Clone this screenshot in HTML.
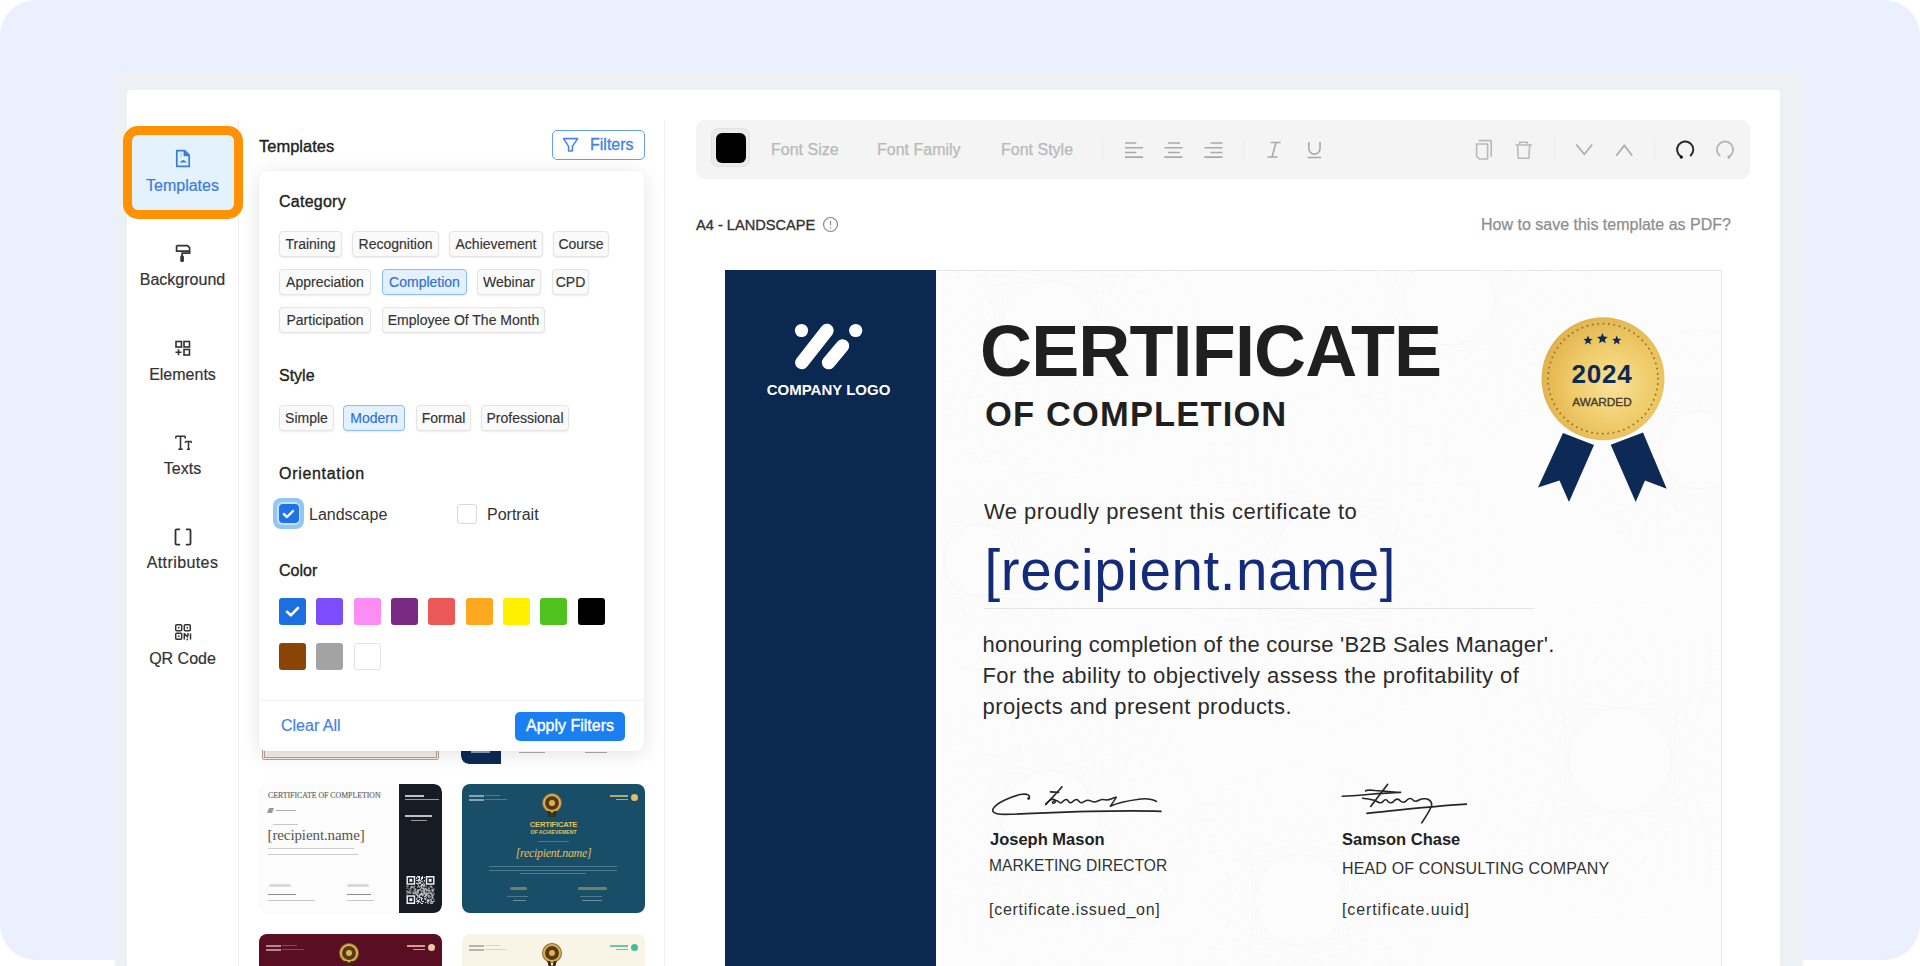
<!DOCTYPE html>
<html><head><meta charset="utf-8">
<style>
*{box-sizing:border-box;margin:0;padding:0}
html,body{width:1920px;height:966px;overflow:hidden;background:#fff;font-family:"Liberation Sans",sans-serif}
.a{position:absolute}
.t{position:absolute;line-height:1;white-space:nowrap}
#bg{position:absolute;left:0;top:0;width:1920px;height:960px;background:#EAF0FD;border-radius:36px}
#frame{position:absolute;left:116px;top:73px;width:1686px;height:920px;background:#EEF1F3;border-radius:3px;box-shadow:0 0 3px 1px #EEF1F3}
#panel{position:absolute;left:126.5px;top:89.5px;width:1653.5px;height:900px;background:#fff;border-radius:4px 4px 0 0}
#side{position:absolute;left:127px;top:120px;width:112px;height:870px;border-right:1px solid #EDEDED}
.nav{-webkit-text-stroke:.2px currentColor;font-size:16px;color:#333;text-align:center;width:111px;left:127px}
#hl{position:absolute;left:123px;top:126px;width:120px;height:93px;border:9px solid #FF9204;border-radius:15px;background:#E4F2FD}
#tpl{position:absolute;left:239px;top:120px;width:426px;height:870px;border-right:1px solid #F1F1F1}
.card{position:absolute;left:259px;top:171px;width:385px;height:580px;background:#fff;border-radius:7px;box-shadow:0 3px 20px rgba(0,0,0,.11),0 0 2px rgba(0,0,0,.04)}
.chip{-webkit-text-stroke:.15px currentColor;position:absolute;height:26px;border:1px solid #E4E4E4;border-radius:4px;background:#FAFAFA;box-shadow:0 1px 2px rgba(0,0,0,.07);font-size:14px;line-height:24px;text-align:center;color:#333;white-space:nowrap}
.chip.on{background:#E3F0FD;border-color:#8DBBF3;color:#2F6FD6}
.h{font-size:16px;color:#222;-webkit-text-stroke:.35px #222}
.sw{position:absolute;width:27px;height:27px;border-radius:3px}
.thumb{position:absolute;border-radius:8px;overflow:hidden}
.tb{font-size:16px;color:#B9B9B9;-webkit-text-stroke:.25px #B9B9B9}
.sep{position:absolute;top:139px;width:1px;height:21px;background:#EBEBEB}
</style></head><body>
<div id="bg"></div>
<div id="frame"></div>
<div id="panel"></div>
<div id="side"></div>
<div id="hl"></div>

<!-- sidebar -->
<svg class="a" style="left:170px;top:145px" width="26" height="26" viewBox="170 145 26 26" fill="none" stroke="#3A7BDE" stroke-width="1.7">
<path d="M176.8 150.6H184.6L189.2 155.2V166.4H176.8Z" stroke-linejoin="round"/><path d="M184.4 150.8V155.4H189" stroke-width="1.6"/><path d="M184.8 151.5L188.5 155.2H184.8Z" fill="#3A7BDE" stroke="none"/>
<path d="M179.6 162.6Q183.2 157.6 186.8 162.6Z" fill="#3A7BDE" stroke="none"/><path d="M181 152.5V157.5" stroke-width=".8" opacity=".5"/>
</svg>
<div class="t nav" style="top:178px;color:#3A7BDE">Templates</div>

<svg class="a" style="left:170px;top:240px" width="26" height="26" viewBox="170 240 26 26" fill="none" stroke="#333" stroke-width="1.7">
<path d="M176.6 245.6H187.4L189.6 247.6V253.2H182.1V256"/><path d="M176.6 245.6V251.2H189.6"/><rect x="180.3" y="255.4" width="3.6" height="6.6" rx="1.3" fill="#333" stroke="none"/>
</svg>
<div class="t nav" style="top:272px">Background</div>

<svg class="a" style="left:174px;top:340px" width="18" height="17" viewBox="0 0 18 17" fill="none" stroke="#333" stroke-width="1.6">
<rect x="2" y="1.5" width="5.5" height="5.5"/><rect x="10" y="1.5" width="5.5" height="5.5"/><rect x="10" y="9.5" width="5.5" height="5.5"/><path d="M1.5 12.3H7.5M4.5 9.3V15.3"/>
</svg>
<div class="t nav" style="top:366.5px">Elements</div>

<svg class="a" style="left:174px;top:434px" width="18" height="17" viewBox="0 0 18 17" fill="none" stroke="#333">
<path d="M1.8 2.2H11.2M6.5 2.2V15.2M4.3 15.2H8.7M1.8 2.2V4.4M11.2 2.2V4.4" stroke-width="1.6"/><path d="M11.5 7.5H17.5M14.5 7.5V15.2M13 15.2H16M11.5 7.5V9M17.5 7.5V9" stroke-width="1.5"/>
</svg>
<div class="t nav" style="top:461px">Texts</div>

<svg class="a" style="left:170px;top:524px" width="26" height="26" viewBox="170 524 26 26" fill="none" stroke="#333" stroke-width="1.8" stroke-linecap="round">
<path d="M179.4 529.4H176.6Q175.5 529.4 175.5 530.5V543.6Q175.5 544.7 176.6 544.7H179.4M186.6 529.4H189.4Q190.5 529.4 190.5 530.5V543.6Q190.5 544.7 189.4 544.7H186.6"/>
</svg>
<div class="t nav" style="top:555px;letter-spacing:.4px">Attributes</div>

<svg class="a" style="left:174px;top:623px" width="18" height="18" viewBox="0 0 18 18" fill="none" stroke="#333" stroke-width="1.5">
<rect x="1.7" y="1.7" width="6" height="6" rx="1"/><rect x="10.3" y="1.7" width="6" height="6" rx="1"/><rect x="1.7" y="10.3" width="6" height="6" rx="1"/>
<rect x="3.9" y="3.9" width="1.6" height="1.6" fill="#333" stroke="none"/><rect x="12.5" y="3.9" width="1.6" height="1.6" fill="#333" stroke="none"/><rect x="3.9" y="12.5" width="1.6" height="1.6" fill="#333" stroke="none"/>
<path d="M10.3 10V16.5M10.3 10.5L14 14.5M14 10V13M16.5 10.5V16.5M12.5 16.5H14" />
</svg>
<div class="t nav" style="top:650.5px">QR Code</div>

<!-- templates panel -->
<div id="tpl"></div>
<div class="t h" style="left:259px;top:138px;font-size:16.5px">Templates</div>
<div class="a" style="left:552px;top:130px;width:93px;height:30px;border:1.7px solid #689BE8;border-radius:5px"></div>
<svg class="a" style="left:558px;top:132px" width="26" height="26" viewBox="558 132 26 26" fill="none" stroke="#4A86E0" stroke-width="1.6" stroke-linejoin="round">
<path d="M563.6 138.6H577.6L572.4 146.4V151H568.6V146.4Z"/>
</svg>
<div class="t" style="left:590px;top:137.2px;font-size:16px;color:#3E82E6;-webkit-text-stroke:.3px #3E82E6">Filters</div>

<!-- thumbnails behind -->
<div class="thumb" style="left:262px;top:600px;width:177px;height:160px;background:#F3EEE6;border:3px double #B7A092;border-radius:2px"></div>
<div class="thumb" style="left:461px;top:600px;width:184px;height:164px;background:#fff"><div class="a" style="left:0;top:0;width:40px;height:164px;background:#0B2A55;border-radius:0 0 0 8px"></div><div class="a" style="left:10px;top:149px;width:19px;height:4px;background:#fff;opacity:.55"></div><div class="a" style="left:58px;top:152px;width:26px;height:1.3px;background:#AAA"></div><div class="a" style="left:124px;top:152px;width:22px;height:1.3px;background:#AAA"></div></div>
<div class="thumb" style="left:259px;top:784px;width:183px;height:129px;background:#FCFCFC;box-shadow:0 0 2px rgba(0,0,0,.05)"><div class="a" style="left:139.5px;top:0;width:43.5px;height:129px;background:#171B24;border-radius:0 8px 8px 0"></div><div class="t" style="left:9px;top:7.5px;font-family:'Liberation Serif';font-size:7.8px;color:#666;letter-spacing:0;-webkit-text-stroke:.15px #666">CERTIFICATE OF COMPLETION</div><div class="a" style="left:9px;top:24px;width:5px;height:5px;background:#999;transform:skewX(-20deg)"></div><div class="a" style="left:17px;top:25.5px;width:20px;height:1.5px;background:#A8A8A8"></div><div class="a" style="left:14px;top:40px;width:25px;height:1.3px;background:#C8C8C8"></div><div class="t" style="left:8.5px;top:44px;font-family:'Liberation Serif';font-size:15px;color:#555;letter-spacing:-.1px">[recipient.name]</div><div class="a" style="left:9px;top:64px;width:86px;height:1.4px;background:#CDCDCD"></div><div class="a" style="left:9px;top:69.5px;width:90px;height:1.4px;background:#CDCDCD"></div><div class="a" style="left:10px;top:100px;width:22px;height:2.5px;border-radius:2px;background:#DADADA"></div><div class="a" style="left:88px;top:100px;width:22px;height:2.5px;border-radius:2px;background:#DADADA"></div><div class="a" style="left:9px;top:109.5px;width:28px;height:1.8px;background:#8C8C8C"></div><div class="a" style="left:9px;top:115.5px;width:47px;height:1.3px;background:#C8C8C8"></div><div class="a" style="left:88px;top:109.5px;width:24px;height:1.8px;background:#8C8C8C"></div><div class="a" style="left:88px;top:115.5px;width:27px;height:1.3px;background:#C8C8C8"></div><div class="a" style="left:146px;top:11px;width:19px;height:1.8px;background:#DDD;opacity:.85"></div><div class="a" style="left:146px;top:15px;width:34px;height:1.3px;background:#999"></div><div class="a" style="left:146px;top:31px;width:27px;height:1.8px;background:#DDD;opacity:.85"></div><div class="a" style="left:152px;top:35.5px;width:16px;height:1.3px;background:#999"></div><svg class="a" style="left:146.5px;top:92px" width="29" height="28" viewBox="0 0 29 29"><g fill="#F2F2F2"><path d="M0 0h9v9h-9z M1.5 1.5v6h6v-6z" fill-rule="evenodd"/><rect x="3" y="3" width="3" height="3"/><path d="M20 0h9v9h-9z M21.5 1.5v6h6v-6z" fill-rule="evenodd"/><rect x="23" y="3" width="3" height="3"/><path d="M0 20h9v9h-9z M1.5 21.5v6h6v-6z" fill-rule="evenodd"/><rect x="3" y="23" width="3" height="3"/><rect x="0" y="10" width="1.05" height="1.05"/><rect x="0" y="12" width="1.05" height="1.05"/><rect x="0" y="15" width="1.05" height="1.05"/><rect x="0" y="16" width="1.05" height="1.05"/><rect x="0" y="18" width="1.05" height="1.05"/><rect x="1" y="10" width="1.05" height="1.05"/><rect x="1" y="16" width="1.05" height="1.05"/><rect x="2" y="13" width="1.05" height="1.05"/><rect x="2" y="16" width="1.05" height="1.05"/><rect x="2" y="17" width="1.05" height="1.05"/><rect x="3" y="15" width="1.05" height="1.05"/><rect x="3" y="17" width="1.05" height="1.05"/><rect x="4" y="11" width="1.05" height="1.05"/><rect x="4" y="12" width="1.05" height="1.05"/><rect x="4" y="13" width="1.05" height="1.05"/><rect x="4" y="15" width="1.05" height="1.05"/><rect x="4" y="17" width="1.05" height="1.05"/><rect x="5" y="10" width="1.05" height="1.05"/><rect x="5" y="11" width="1.05" height="1.05"/><rect x="6" y="11" width="1.05" height="1.05"/><rect x="6" y="17" width="1.05" height="1.05"/><rect x="7" y="11" width="1.05" height="1.05"/><rect x="7" y="12" width="1.05" height="1.05"/><rect x="7" y="15" width="1.05" height="1.05"/><rect x="7" y="17" width="1.05" height="1.05"/><rect x="7" y="18" width="1.05" height="1.05"/><rect x="8" y="10" width="1.05" height="1.05"/><rect x="8" y="13" width="1.05" height="1.05"/><rect x="8" y="15" width="1.05" height="1.05"/><rect x="8" y="17" width="1.05" height="1.05"/><rect x="9" y="13" width="1.05" height="1.05"/><rect x="9" y="14" width="1.05" height="1.05"/><rect x="9" y="16" width="1.05" height="1.05"/><rect x="9" y="17" width="1.05" height="1.05"/><rect x="9" y="18" width="1.05" height="1.05"/><rect x="10" y="1" width="1.05" height="1.05"/><rect x="10" y="2" width="1.05" height="1.05"/><rect x="10" y="4" width="1.05" height="1.05"/><rect x="10" y="7" width="1.05" height="1.05"/><rect x="10" y="16" width="1.05" height="1.05"/><rect x="10" y="18" width="1.05" height="1.05"/><rect x="10" y="19" width="1.05" height="1.05"/><rect x="10" y="23" width="1.05" height="1.05"/><rect x="10" y="24" width="1.05" height="1.05"/><rect x="10" y="26" width="1.05" height="1.05"/><rect x="11" y="0" width="1.05" height="1.05"/><rect x="11" y="4" width="1.05" height="1.05"/><rect x="11" y="7" width="1.05" height="1.05"/><rect x="11" y="8" width="1.05" height="1.05"/><rect x="11" y="11" width="1.05" height="1.05"/><rect x="11" y="14" width="1.05" height="1.05"/><rect x="11" y="15" width="1.05" height="1.05"/><rect x="11" y="16" width="1.05" height="1.05"/><rect x="11" y="17" width="1.05" height="1.05"/><rect x="11" y="19" width="1.05" height="1.05"/><rect x="11" y="20" width="1.05" height="1.05"/><rect x="11" y="22" width="1.05" height="1.05"/><rect x="11" y="25" width="1.05" height="1.05"/><rect x="11" y="26" width="1.05" height="1.05"/><rect x="11" y="28" width="1.05" height="1.05"/><rect x="12" y="0" width="1.05" height="1.05"/><rect x="12" y="1" width="1.05" height="1.05"/><rect x="12" y="3" width="1.05" height="1.05"/><rect x="12" y="4" width="1.05" height="1.05"/><rect x="12" y="5" width="1.05" height="1.05"/><rect x="12" y="7" width="1.05" height="1.05"/><rect x="12" y="9" width="1.05" height="1.05"/><rect x="12" y="10" width="1.05" height="1.05"/><rect x="12" y="14" width="1.05" height="1.05"/><rect x="12" y="15" width="1.05" height="1.05"/><rect x="12" y="17" width="1.05" height="1.05"/><rect x="12" y="20" width="1.05" height="1.05"/><rect x="12" y="21" width="1.05" height="1.05"/><rect x="12" y="25" width="1.05" height="1.05"/><rect x="12" y="26" width="1.05" height="1.05"/><rect x="12" y="27" width="1.05" height="1.05"/><rect x="13" y="0" width="1.05" height="1.05"/><rect x="13" y="1" width="1.05" height="1.05"/><rect x="13" y="2" width="1.05" height="1.05"/><rect x="13" y="3" width="1.05" height="1.05"/><rect x="13" y="4" width="1.05" height="1.05"/><rect x="13" y="6" width="1.05" height="1.05"/><rect x="13" y="7" width="1.05" height="1.05"/><rect x="13" y="11" width="1.05" height="1.05"/><rect x="13" y="14" width="1.05" height="1.05"/><rect x="13" y="19" width="1.05" height="1.05"/><rect x="13" y="20" width="1.05" height="1.05"/><rect x="13" y="21" width="1.05" height="1.05"/><rect x="13" y="22" width="1.05" height="1.05"/><rect x="13" y="24" width="1.05" height="1.05"/><rect x="13" y="26" width="1.05" height="1.05"/><rect x="14" y="4" width="1.05" height="1.05"/><rect x="14" y="6" width="1.05" height="1.05"/><rect x="14" y="7" width="1.05" height="1.05"/><rect x="14" y="10" width="1.05" height="1.05"/><rect x="14" y="13" width="1.05" height="1.05"/><rect x="14" y="14" width="1.05" height="1.05"/><rect x="14" y="18" width="1.05" height="1.05"/><rect x="14" y="19" width="1.05" height="1.05"/><rect x="14" y="22" width="1.05" height="1.05"/><rect x="14" y="27" width="1.05" height="1.05"/><rect x="15" y="1" width="1.05" height="1.05"/><rect x="15" y="2" width="1.05" height="1.05"/><rect x="15" y="3" width="1.05" height="1.05"/><rect x="15" y="5" width="1.05" height="1.05"/><rect x="15" y="8" width="1.05" height="1.05"/><rect x="15" y="9" width="1.05" height="1.05"/><rect x="15" y="10" width="1.05" height="1.05"/><rect x="15" y="11" width="1.05" height="1.05"/><rect x="15" y="12" width="1.05" height="1.05"/><rect x="15" y="15" width="1.05" height="1.05"/><rect x="15" y="17" width="1.05" height="1.05"/><rect x="15" y="18" width="1.05" height="1.05"/><rect x="15" y="19" width="1.05" height="1.05"/><rect x="15" y="22" width="1.05" height="1.05"/><rect x="15" y="23" width="1.05" height="1.05"/><rect x="15" y="24" width="1.05" height="1.05"/><rect x="15" y="25" width="1.05" height="1.05"/><rect x="15" y="28" width="1.05" height="1.05"/><rect x="16" y="0" width="1.05" height="1.05"/><rect x="16" y="1" width="1.05" height="1.05"/><rect x="16" y="2" width="1.05" height="1.05"/><rect x="16" y="5" width="1.05" height="1.05"/><rect x="16" y="8" width="1.05" height="1.05"/><rect x="16" y="9" width="1.05" height="1.05"/><rect x="16" y="12" width="1.05" height="1.05"/><rect x="16" y="15" width="1.05" height="1.05"/><rect x="16" y="18" width="1.05" height="1.05"/><rect x="16" y="19" width="1.05" height="1.05"/><rect x="16" y="20" width="1.05" height="1.05"/><rect x="16" y="23" width="1.05" height="1.05"/><rect x="16" y="26" width="1.05" height="1.05"/><rect x="16" y="28" width="1.05" height="1.05"/><rect x="17" y="7" width="1.05" height="1.05"/><rect x="17" y="9" width="1.05" height="1.05"/><rect x="17" y="10" width="1.05" height="1.05"/><rect x="17" y="12" width="1.05" height="1.05"/><rect x="17" y="13" width="1.05" height="1.05"/><rect x="17" y="14" width="1.05" height="1.05"/><rect x="17" y="16" width="1.05" height="1.05"/><rect x="17" y="17" width="1.05" height="1.05"/><rect x="17" y="19" width="1.05" height="1.05"/><rect x="17" y="26" width="1.05" height="1.05"/><rect x="18" y="1" width="1.05" height="1.05"/><rect x="18" y="4" width="1.05" height="1.05"/><rect x="18" y="5" width="1.05" height="1.05"/><rect x="18" y="8" width="1.05" height="1.05"/><rect x="18" y="9" width="1.05" height="1.05"/><rect x="18" y="10" width="1.05" height="1.05"/><rect x="18" y="13" width="1.05" height="1.05"/><rect x="18" y="14" width="1.05" height="1.05"/><rect x="18" y="15" width="1.05" height="1.05"/><rect x="18" y="16" width="1.05" height="1.05"/><rect x="18" y="17" width="1.05" height="1.05"/><rect x="18" y="18" width="1.05" height="1.05"/><rect x="18" y="21" width="1.05" height="1.05"/><rect x="18" y="23" width="1.05" height="1.05"/><rect x="19" y="12" width="1.05" height="1.05"/><rect x="19" y="13" width="1.05" height="1.05"/><rect x="19" y="17" width="1.05" height="1.05"/><rect x="19" y="19" width="1.05" height="1.05"/><rect x="19" y="20" width="1.05" height="1.05"/><rect x="19" y="21" width="1.05" height="1.05"/><rect x="19" y="23" width="1.05" height="1.05"/><rect x="19" y="24" width="1.05" height="1.05"/><rect x="19" y="27" width="1.05" height="1.05"/><rect x="20" y="10" width="1.05" height="1.05"/><rect x="20" y="13" width="1.05" height="1.05"/><rect x="20" y="14" width="1.05" height="1.05"/><rect x="20" y="15" width="1.05" height="1.05"/><rect x="20" y="17" width="1.05" height="1.05"/><rect x="20" y="18" width="1.05" height="1.05"/><rect x="20" y="19" width="1.05" height="1.05"/><rect x="20" y="20" width="1.05" height="1.05"/><rect x="20" y="22" width="1.05" height="1.05"/><rect x="21" y="14" width="1.05" height="1.05"/><rect x="21" y="18" width="1.05" height="1.05"/><rect x="21" y="19" width="1.05" height="1.05"/><rect x="21" y="24" width="1.05" height="1.05"/><rect x="21" y="25" width="1.05" height="1.05"/><rect x="21" y="26" width="1.05" height="1.05"/><rect x="21" y="27" width="1.05" height="1.05"/><rect x="22" y="12" width="1.05" height="1.05"/><rect x="22" y="14" width="1.05" height="1.05"/><rect x="22" y="15" width="1.05" height="1.05"/><rect x="22" y="17" width="1.05" height="1.05"/><rect x="22" y="18" width="1.05" height="1.05"/><rect x="22" y="20" width="1.05" height="1.05"/><rect x="22" y="21" width="1.05" height="1.05"/><rect x="22" y="24" width="1.05" height="1.05"/><rect x="22" y="25" width="1.05" height="1.05"/><rect x="22" y="26" width="1.05" height="1.05"/><rect x="22" y="28" width="1.05" height="1.05"/><rect x="23" y="12" width="1.05" height="1.05"/><rect x="23" y="14" width="1.05" height="1.05"/><rect x="23" y="15" width="1.05" height="1.05"/><rect x="23" y="17" width="1.05" height="1.05"/><rect x="23" y="20" width="1.05" height="1.05"/><rect x="23" y="22" width="1.05" height="1.05"/><rect x="23" y="25" width="1.05" height="1.05"/><rect x="24" y="10" width="1.05" height="1.05"/><rect x="24" y="15" width="1.05" height="1.05"/><rect x="24" y="17" width="1.05" height="1.05"/><rect x="24" y="21" width="1.05" height="1.05"/><rect x="24" y="24" width="1.05" height="1.05"/><rect x="24" y="27" width="1.05" height="1.05"/><rect x="25" y="10" width="1.05" height="1.05"/><rect x="25" y="11" width="1.05" height="1.05"/><rect x="25" y="17" width="1.05" height="1.05"/><rect x="25" y="18" width="1.05" height="1.05"/><rect x="25" y="19" width="1.05" height="1.05"/><rect x="25" y="24" width="1.05" height="1.05"/><rect x="25" y="25" width="1.05" height="1.05"/><rect x="25" y="26" width="1.05" height="1.05"/><rect x="25" y="28" width="1.05" height="1.05"/><rect x="26" y="11" width="1.05" height="1.05"/><rect x="26" y="13" width="1.05" height="1.05"/><rect x="26" y="14" width="1.05" height="1.05"/><rect x="26" y="15" width="1.05" height="1.05"/><rect x="26" y="18" width="1.05" height="1.05"/><rect x="26" y="20" width="1.05" height="1.05"/><rect x="26" y="21" width="1.05" height="1.05"/><rect x="26" y="22" width="1.05" height="1.05"/><rect x="26" y="23" width="1.05" height="1.05"/><rect x="26" y="26" width="1.05" height="1.05"/><rect x="26" y="27" width="1.05" height="1.05"/><rect x="26" y="28" width="1.05" height="1.05"/><rect x="27" y="14" width="1.05" height="1.05"/><rect x="27" y="15" width="1.05" height="1.05"/><rect x="27" y="16" width="1.05" height="1.05"/><rect x="27" y="19" width="1.05" height="1.05"/><rect x="27" y="20" width="1.05" height="1.05"/><rect x="27" y="22" width="1.05" height="1.05"/><rect x="27" y="26" width="1.05" height="1.05"/><rect x="28" y="13" width="1.05" height="1.05"/><rect x="28" y="18" width="1.05" height="1.05"/><rect x="28" y="24" width="1.05" height="1.05"/><rect x="28" y="26" width="1.05" height="1.05"/></g></svg></div>
<div class="thumb" style="left:462px;top:784px;width:183px;height:129px;background:#194E68"><div class="a" style="left:7px;top:11px;width:15px;height:1.5px;background:#CFE0E8;opacity:.6"></div><div class="a" style="left:23px;top:11px;width:15px;height:1.2px;background:#CFE0E8;opacity:.3"></div><div class="a" style="left:7px;top:15px;width:15px;height:1.5px;background:#CFE0E8;opacity:.6"></div><div class="a" style="left:23px;top:15px;width:22px;height:1.2px;background:#CFE0E8;opacity:.3"></div><div class="a" style="left:148px;top:11px;width:18px;height:1.6px;background:#E5BF5E;opacity:.8"></div><div class="a" style="left:154px;top:14.5px;width:12px;height:1.6px;background:#E5BF5E;opacity:.8"></div><div class="a" style="left:168.5px;top:10px;width:7px;height:7px;border-radius:50%;background:#E5BF5E"></div><div class="a" style="left:81px;top:10px;width:18px;height:18px;border-radius:50%;background:#5A3A12;border:2.5px solid #D9B25A;box-shadow:0 0 0 1px #8A6A2A"></div><div class="a" style="left:87px;top:16px;width:6px;height:6px;border-radius:50%;background:#D9B25A"></div><div class="a" style="left:86px;top:27px;width:3px;height:6px;background:#3A2A10;transform:skewX(15deg)"></div><div class="a" style="left:91px;top:27px;width:3px;height:6px;background:#3A2A10;transform:skewX(-15deg)"></div><div class="t" style="left:0;width:183px;text-align:center;top:37px;font-size:7.6px;font-weight:bold;color:#E5BF5E;letter-spacing:-.2px">CERTIFICATE</div><div class="t" style="left:0;width:183px;text-align:center;top:46px;font-size:5.2px;font-weight:bold;color:#E5BF5E">OF ACHIEVEMENT</div><div class="a" style="left:76px;top:57px;width:31px;height:1px;background:#E5BF5E;opacity:.35"></div><div class="t" style="left:0;width:183px;text-align:center;top:63px;font-family:'Liberation Serif';font-style:italic;font-size:12px;color:#E5BF5E;letter-spacing:-.3px">[recipient.name]</div><div class="a" style="left:27px;top:82.0px;width:128px;height:1.2px;background:#CFE0E8;opacity:.3"></div><div class="a" style="left:27px;top:85.6px;width:128px;height:1.2px;background:#CFE0E8;opacity:.3"></div><div class="a" style="left:58px;top:89.2px;width:66px;height:1.2px;background:#CFE0E8;opacity:.3"></div><div class="a" style="left:48px;top:103px;width:17px;height:3px;border-radius:2px;background:#E5BF5E;opacity:.45"></div><div class="a" style="left:116px;top:103px;width:29px;height:3px;border-radius:2px;background:#E5BF5E;opacity:.45"></div><div class="a" style="left:45px;top:112px;width:21px;height:1.1px;background:#CFE0E8;opacity:.3"></div><div class="a" style="left:51px;top:116px;width:13px;height:1.2px;background:#CFE0E8;opacity:.45"></div><div class="a" style="left:118px;top:112px;width:22px;height:1.1px;background:#CFE0E8;opacity:.3"></div><div class="a" style="left:120px;top:116px;width:20px;height:1.2px;background:#CFE0E8;opacity:.45"></div></div>
<div class="thumb" style="left:259px;top:934px;width:183px;height:60px;background:#5A0E24"><div class="a" style="left:7px;top:11px;width:15px;height:1.5px;background:#F1D9DF;opacity:.6"></div><div class="a" style="left:23px;top:11px;width:15px;height:1.2px;background:#F1D9DF;opacity:.3"></div><div class="a" style="left:7px;top:15px;width:15px;height:1.5px;background:#F1D9DF;opacity:.6"></div><div class="a" style="left:23px;top:15px;width:22px;height:1.2px;background:#F1D9DF;opacity:.3"></div><div class="a" style="left:148px;top:11px;width:18px;height:1.6px;background:#E9C9A6;opacity:.8"></div><div class="a" style="left:154px;top:14.5px;width:12px;height:1.6px;background:#E9C9A6;opacity:.8"></div><div class="a" style="left:168.5px;top:10px;width:7px;height:7px;border-radius:50%;background:#E9C9A6"></div><div class="a" style="left:81px;top:10px;width:18px;height:18px;border-radius:50%;background:#5A3A12;border:2.5px solid #D9B25A;box-shadow:0 0 0 1px #8A6A2A"></div><div class="a" style="left:87px;top:16px;width:6px;height:6px;border-radius:50%;background:#D9B25A"></div><div class="a" style="left:86px;top:27px;width:3px;height:6px;background:#3A2A10;transform:skewX(15deg)"></div><div class="a" style="left:91px;top:27px;width:3px;height:6px;background:#3A2A10;transform:skewX(-15deg)"></div></div>
<div class="thumb" style="left:462px;top:934px;width:183px;height:60px;background:#F8F5E7"><div class="a" style="left:7px;top:11px;width:15px;height:1.5px;background:#8A8A80;opacity:.6"></div><div class="a" style="left:23px;top:11px;width:15px;height:1.2px;background:#8A8A80;opacity:.3"></div><div class="a" style="left:7px;top:15px;width:15px;height:1.5px;background:#8A8A80;opacity:.6"></div><div class="a" style="left:23px;top:15px;width:22px;height:1.2px;background:#8A8A80;opacity:.3"></div><div class="a" style="left:148px;top:11px;width:18px;height:1.6px;background:#3DBFA2;opacity:.8"></div><div class="a" style="left:154px;top:14.5px;width:12px;height:1.6px;background:#3DBFA2;opacity:.8"></div><div class="a" style="left:168.5px;top:10px;width:7px;height:7px;border-radius:50%;background:#3DBFA2"></div><div class="a" style="left:81px;top:10px;width:18px;height:18px;border-radius:50%;background:#5A3A12;border:2.5px solid #D9B25A;box-shadow:0 0 0 1px #8A6A2A"></div><div class="a" style="left:87px;top:16px;width:6px;height:6px;border-radius:50%;background:#D9B25A"></div><div class="a" style="left:86px;top:27px;width:3px;height:6px;background:#3A2A10;transform:skewX(15deg)"></div><div class="a" style="left:91px;top:27px;width:3px;height:6px;background:#3A2A10;transform:skewX(-15deg)"></div></div>

<!-- filter card -->
<div class="card"></div>
<div class="t h" style="left:279px;top:194px;letter-spacing:.25px">Category</div>
<div class="chip" style="left:279px;top:231px;width:63px">Training</div>
<div class="chip" style="left:352px;top:231px;width:87px">Recognition</div>
<div class="chip" style="left:449px;top:231px;width:94px">Achievement</div>
<div class="chip" style="left:553px;top:231px;width:56px">Course</div>
<div class="chip" style="left:279px;top:269px;width:92px">Appreciation</div>
<div class="chip on" style="left:382px;top:269px;width:85px">Completion</div>
<div class="chip" style="left:477px;top:269px;width:64px">Webinar</div>
<div class="chip" style="left:552px;top:269px;width:37px">CPD</div>
<div class="chip" style="left:279px;top:307px;width:92px">Participation</div>
<div class="chip" style="left:382px;top:307px;width:163px">Employee Of The Month</div>

<div class="t h" style="left:279px;top:368px">Style</div>
<div class="chip" style="left:279px;top:405px;width:55px">Simple</div>
<div class="chip on" style="left:343px;top:405px;width:62px">Modern</div>
<div class="chip" style="left:416px;top:405px;width:55px">Formal</div>
<div class="chip" style="left:481px;top:405px;width:88px">Professional</div>

<div class="t h" style="left:279px;top:465.5px;letter-spacing:.7px">Orientation</div>
<div class="a" style="left:273px;top:497.5px;width:31px;height:31.5px;border-radius:8px;background:#94C5F7"></div>
<div class="a" style="left:277px;top:501.5px;width:23px;height:23.5px;border-radius:5.5px;background:#C6E2FC"></div>
<div class="a" style="left:279px;top:503.8px;width:19.5px;height:19.5px;border-radius:4px;background:#1F73E8"></div>
<svg class="a" style="left:278.2px;top:503px" width="21" height="21" viewBox="0 0 21 21" fill="none" stroke="#fff" stroke-width="2.4" stroke-linecap="round" stroke-linejoin="round"><path d="M5.8 11L9 14L15 8"/></svg>
<div class="t" style="left:309px;top:506.5px;font-size:16px;color:#333">Landscape</div>
<div class="a" style="left:457px;top:503.5px;width:20px;height:20px;border-radius:3px;border:1px solid #D9D9D9;background:#fff"></div>
<div class="t" style="left:487px;top:506.5px;font-size:16px;color:#333">Portrait</div>

<div class="t h" style="left:279px;top:562.7px">Color</div>
<div class="sw" style="left:279px;top:598px;background:#1C6FE0"></div>
<svg class="a" style="left:279px;top:598px" width="27" height="27" viewBox="0 0 27 27" fill="none" stroke="#fff" stroke-width="2.6" stroke-linecap="round" stroke-linejoin="round"><path d="M8 13.8L11.8 17.3L19 10"/></svg>
<div class="sw" style="left:316px;top:598px;background:#7C4DFA"></div>
<div class="sw" style="left:354px;top:598px;background:#FD8CF5"></div>
<div class="sw" style="left:391px;top:598px;background:#792A82"></div>
<div class="sw" style="left:428px;top:598px;background:#EA5858"></div>
<div class="sw" style="left:466px;top:598px;background:#FEA81F"></div>
<div class="sw" style="left:503px;top:598px;background:#FFF000"></div>
<div class="sw" style="left:540px;top:598px;background:#50C21F"></div>
<div class="sw" style="left:578px;top:598px;background:#000"></div>
<div class="sw" style="left:279px;top:643px;background:#8A4506"></div>
<div class="sw" style="left:316px;top:643px;background:#A3A3A3"></div>
<div class="sw" style="left:354px;top:643px;background:#fff;border:1px solid #E3E3E3"></div>

<div class="a" style="left:259px;top:700px;width:386px;height:1px;background:#F1F1F1"></div>
<div class="t" style="left:281px;top:718.3px;font-size:16px;color:#3E82E6;-webkit-text-stroke:.2px #3E82E6">Clear All</div>
<div class="a" style="left:515px;top:712px;width:110px;height:29px;border-radius:5px;background:#1A80F2"></div>
<div class="t" style="left:515px;width:110px;text-align:center;top:718.3px;font-size:16px;color:#fff;-webkit-text-stroke:.35px #fff">Apply Filters</div>


<!-- toolbar -->
<div class="a" style="left:696px;top:120px;width:1054px;height:59px;background:#F4F4F4;border-radius:9px"></div>
<div class="a" style="left:711px;top:128px;width:39px;height:39px;background:#EBEBEB;border:1px solid #E2E2E2;border-radius:7px"></div>
<div class="a" style="left:715.5px;top:132.5px;width:30.5px;height:30.5px;background:#000;border-radius:6px"></div>
<div class="t tb" style="left:771px;top:142.4px">Font Size</div>
<div class="t tb" style="left:877px;top:142.4px">Font Family</div>
<div class="t tb" style="left:1001px;top:142.4px">Font Style</div>
<div class="sep" style="left:1102px"></div>
<div class="sep" style="left:1243px"></div>
<div class="sep" style="left:1554px"></div>
<div class="sep" style="left:1653.5px"></div>
<svg class="a" style="left:1120px;top:138px" width="110" height="24" viewBox="0 0 110 24" fill="none" stroke="#A9A9A9" stroke-width="1.6">
<path d="M5 5H16.3M5 9.8H23M5 14.5H16.3M5 19.1H23"/>
<path d="M48 5H60M44.4 9.8H62.5M48 14.5H60M44.4 19.1H62.5"/>
<path d="M90.6 5H102.5M84.4 9.8H102.5M90.6 14.5H102.5M84.4 19.1H102.5"/>
</svg>
<svg class="a" style="left:1262px;top:138px" width="66" height="24" viewBox="0 0 66 24" fill="none" stroke="#A9A9A9" stroke-width="1.6">
<path d="M8.6 4.5H18.6M5.5 19H15.5M14 4.5L10 19"/>
<path d="M46.8 4V10.5A5.6 5.6 0 0 0 58 10.5V4M45.5 19.5H59"/>
</svg>
<svg class="a" style="left:1465px;top:132px" width="80" height="36" viewBox="1465 132 80 36" fill="none" stroke="#B9B9B9" stroke-width="1.6" stroke-linejoin="round">
<path d="M1478.8 140.6H1491.2V156.8"/><path d="M1476.6 144H1487.6V159H1479.3L1476.6 156.3Z"/>
<path d="M1515.4 145H1532M1519.6 145V142.2H1527.4V145M1517.6 145L1518.2 158.2H1529L1529.6 145"/>
</svg>
<svg class="a" style="left:1570px;top:138px" width="70" height="24" viewBox="0 0 70 24" fill="none" stroke="#ABABAB" stroke-width="1.6">
<path d="M6.3 6.4L14.3 16.2L22.2 6.4"/>
<path d="M46.3 17.7L54.3 7.4L62.2 17.7"/>
</svg>
<svg class="a" style="left:1665px;top:130px" width="80" height="40" viewBox="1665 130 80 40" fill="none" stroke-width="1.9" stroke-linecap="round">
<path d="M1690.7 155.5A8.1 8.1 0 1 0 1681.15 156.6" stroke="#262626"/><circle cx="1681.3" cy="157.1" r="1.7" fill="#111" stroke="none"/>
<path d="M1719.5 155.5A8.1 8.1 0 1 1 1729.05 156.6" stroke="#B8B8B8"/><circle cx="1728.9" cy="157.1" r="1.6" fill="#B0B0B0" stroke="none"/>
</svg>

<div class="t" style="left:696px;top:218px;font-size:14.6px;color:#333;-webkit-text-stroke:.35px #333">A4 - LANDSCAPE</div>
<svg class="a" style="left:822px;top:216px" width="17" height="17" viewBox="0 0 17 17" fill="none" stroke="#8A8A8A" stroke-width="1.2"><circle cx="8.5" cy="8.5" r="7"/><path d="M8.5 4.8V9.6M8.5 11.3V12.4"/></svg>
<div class="t" style="left:1481px;top:216.7px;font-size:16px;color:#8E8E8E;-webkit-text-stroke:.25px #8E8E8E">How to save this template as PDF?</div>

<!-- certificate -->
<div class="a" style="left:725px;top:270px;width:997px;height:720px;background:#FCFCFC;border:1px solid #E9E9E9;border-left:none;overflow:hidden">
</div>
<svg class="a" style="left:0;top:0" width="1920" height="966" viewBox="0 0 1920 966"><defs><clipPath id="cc"><rect x="941" y="271" width="780" height="700"/></clipPath></defs><g clip-path="url(#cc)" fill="none" stroke="#000" stroke-opacity=".018" stroke-width=".7"><ellipse cx="1050" cy="330" rx="150" ry="48.0" transform="rotate(0 1050 330)"/><ellipse cx="1050" cy="330" rx="150" ry="48.0" transform="rotate(10 1050 330)"/><ellipse cx="1050" cy="330" rx="150" ry="48.0" transform="rotate(20 1050 330)"/><ellipse cx="1050" cy="330" rx="150" ry="48.0" transform="rotate(30 1050 330)"/><ellipse cx="1050" cy="330" rx="150" ry="48.0" transform="rotate(40 1050 330)"/><ellipse cx="1050" cy="330" rx="150" ry="48.0" transform="rotate(50 1050 330)"/><ellipse cx="1050" cy="330" rx="150" ry="48.0" transform="rotate(60 1050 330)"/><ellipse cx="1050" cy="330" rx="150" ry="48.0" transform="rotate(70 1050 330)"/><ellipse cx="1050" cy="330" rx="150" ry="48.0" transform="rotate(80 1050 330)"/><ellipse cx="1050" cy="330" rx="150" ry="48.0" transform="rotate(90 1050 330)"/><ellipse cx="1050" cy="330" rx="150" ry="48.0" transform="rotate(100 1050 330)"/><ellipse cx="1050" cy="330" rx="150" ry="48.0" transform="rotate(110 1050 330)"/><ellipse cx="1050" cy="330" rx="150" ry="48.0" transform="rotate(120 1050 330)"/><ellipse cx="1050" cy="330" rx="150" ry="48.0" transform="rotate(130 1050 330)"/><ellipse cx="1050" cy="330" rx="150" ry="48.0" transform="rotate(140 1050 330)"/><ellipse cx="1050" cy="330" rx="150" ry="48.0" transform="rotate(150 1050 330)"/><ellipse cx="1050" cy="330" rx="150" ry="48.0" transform="rotate(160 1050 330)"/><ellipse cx="1050" cy="330" rx="150" ry="48.0" transform="rotate(170 1050 330)"/><ellipse cx="1330" cy="560" rx="170" ry="54.4" transform="rotate(0 1330 560)"/><ellipse cx="1330" cy="560" rx="170" ry="54.4" transform="rotate(10 1330 560)"/><ellipse cx="1330" cy="560" rx="170" ry="54.4" transform="rotate(20 1330 560)"/><ellipse cx="1330" cy="560" rx="170" ry="54.4" transform="rotate(30 1330 560)"/><ellipse cx="1330" cy="560" rx="170" ry="54.4" transform="rotate(40 1330 560)"/><ellipse cx="1330" cy="560" rx="170" ry="54.4" transform="rotate(50 1330 560)"/><ellipse cx="1330" cy="560" rx="170" ry="54.4" transform="rotate(60 1330 560)"/><ellipse cx="1330" cy="560" rx="170" ry="54.4" transform="rotate(70 1330 560)"/><ellipse cx="1330" cy="560" rx="170" ry="54.4" transform="rotate(80 1330 560)"/><ellipse cx="1330" cy="560" rx="170" ry="54.4" transform="rotate(90 1330 560)"/><ellipse cx="1330" cy="560" rx="170" ry="54.4" transform="rotate(100 1330 560)"/><ellipse cx="1330" cy="560" rx="170" ry="54.4" transform="rotate(110 1330 560)"/><ellipse cx="1330" cy="560" rx="170" ry="54.4" transform="rotate(120 1330 560)"/><ellipse cx="1330" cy="560" rx="170" ry="54.4" transform="rotate(130 1330 560)"/><ellipse cx="1330" cy="560" rx="170" ry="54.4" transform="rotate(140 1330 560)"/><ellipse cx="1330" cy="560" rx="170" ry="54.4" transform="rotate(150 1330 560)"/><ellipse cx="1330" cy="560" rx="170" ry="54.4" transform="rotate(160 1330 560)"/><ellipse cx="1330" cy="560" rx="170" ry="54.4" transform="rotate(170 1330 560)"/><ellipse cx="1620" cy="760" rx="160" ry="51.2" transform="rotate(0 1620 760)"/><ellipse cx="1620" cy="760" rx="160" ry="51.2" transform="rotate(10 1620 760)"/><ellipse cx="1620" cy="760" rx="160" ry="51.2" transform="rotate(20 1620 760)"/><ellipse cx="1620" cy="760" rx="160" ry="51.2" transform="rotate(30 1620 760)"/><ellipse cx="1620" cy="760" rx="160" ry="51.2" transform="rotate(40 1620 760)"/><ellipse cx="1620" cy="760" rx="160" ry="51.2" transform="rotate(50 1620 760)"/><ellipse cx="1620" cy="760" rx="160" ry="51.2" transform="rotate(60 1620 760)"/><ellipse cx="1620" cy="760" rx="160" ry="51.2" transform="rotate(70 1620 760)"/><ellipse cx="1620" cy="760" rx="160" ry="51.2" transform="rotate(80 1620 760)"/><ellipse cx="1620" cy="760" rx="160" ry="51.2" transform="rotate(90 1620 760)"/><ellipse cx="1620" cy="760" rx="160" ry="51.2" transform="rotate(100 1620 760)"/><ellipse cx="1620" cy="760" rx="160" ry="51.2" transform="rotate(110 1620 760)"/><ellipse cx="1620" cy="760" rx="160" ry="51.2" transform="rotate(120 1620 760)"/><ellipse cx="1620" cy="760" rx="160" ry="51.2" transform="rotate(130 1620 760)"/><ellipse cx="1620" cy="760" rx="160" ry="51.2" transform="rotate(140 1620 760)"/><ellipse cx="1620" cy="760" rx="160" ry="51.2" transform="rotate(150 1620 760)"/><ellipse cx="1620" cy="760" rx="160" ry="51.2" transform="rotate(160 1620 760)"/><ellipse cx="1620" cy="760" rx="160" ry="51.2" transform="rotate(170 1620 760)"/><ellipse cx="1050" cy="820" rx="150" ry="48.0" transform="rotate(0 1050 820)"/><ellipse cx="1050" cy="820" rx="150" ry="48.0" transform="rotate(10 1050 820)"/><ellipse cx="1050" cy="820" rx="150" ry="48.0" transform="rotate(20 1050 820)"/><ellipse cx="1050" cy="820" rx="150" ry="48.0" transform="rotate(30 1050 820)"/><ellipse cx="1050" cy="820" rx="150" ry="48.0" transform="rotate(40 1050 820)"/><ellipse cx="1050" cy="820" rx="150" ry="48.0" transform="rotate(50 1050 820)"/><ellipse cx="1050" cy="820" rx="150" ry="48.0" transform="rotate(60 1050 820)"/><ellipse cx="1050" cy="820" rx="150" ry="48.0" transform="rotate(70 1050 820)"/><ellipse cx="1050" cy="820" rx="150" ry="48.0" transform="rotate(80 1050 820)"/><ellipse cx="1050" cy="820" rx="150" ry="48.0" transform="rotate(90 1050 820)"/><ellipse cx="1050" cy="820" rx="150" ry="48.0" transform="rotate(100 1050 820)"/><ellipse cx="1050" cy="820" rx="150" ry="48.0" transform="rotate(110 1050 820)"/><ellipse cx="1050" cy="820" rx="150" ry="48.0" transform="rotate(120 1050 820)"/><ellipse cx="1050" cy="820" rx="150" ry="48.0" transform="rotate(130 1050 820)"/><ellipse cx="1050" cy="820" rx="150" ry="48.0" transform="rotate(140 1050 820)"/><ellipse cx="1050" cy="820" rx="150" ry="48.0" transform="rotate(150 1050 820)"/><ellipse cx="1050" cy="820" rx="150" ry="48.0" transform="rotate(160 1050 820)"/><ellipse cx="1050" cy="820" rx="150" ry="48.0" transform="rotate(170 1050 820)"/><ellipse cx="1450" cy="300" rx="140" ry="44.8" transform="rotate(0 1450 300)"/><ellipse cx="1450" cy="300" rx="140" ry="44.8" transform="rotate(10 1450 300)"/><ellipse cx="1450" cy="300" rx="140" ry="44.8" transform="rotate(20 1450 300)"/><ellipse cx="1450" cy="300" rx="140" ry="44.8" transform="rotate(30 1450 300)"/><ellipse cx="1450" cy="300" rx="140" ry="44.8" transform="rotate(40 1450 300)"/><ellipse cx="1450" cy="300" rx="140" ry="44.8" transform="rotate(50 1450 300)"/><ellipse cx="1450" cy="300" rx="140" ry="44.8" transform="rotate(60 1450 300)"/><ellipse cx="1450" cy="300" rx="140" ry="44.8" transform="rotate(70 1450 300)"/><ellipse cx="1450" cy="300" rx="140" ry="44.8" transform="rotate(80 1450 300)"/><ellipse cx="1450" cy="300" rx="140" ry="44.8" transform="rotate(90 1450 300)"/><ellipse cx="1450" cy="300" rx="140" ry="44.8" transform="rotate(100 1450 300)"/><ellipse cx="1450" cy="300" rx="140" ry="44.8" transform="rotate(110 1450 300)"/><ellipse cx="1450" cy="300" rx="140" ry="44.8" transform="rotate(120 1450 300)"/><ellipse cx="1450" cy="300" rx="140" ry="44.8" transform="rotate(130 1450 300)"/><ellipse cx="1450" cy="300" rx="140" ry="44.8" transform="rotate(140 1450 300)"/><ellipse cx="1450" cy="300" rx="140" ry="44.8" transform="rotate(150 1450 300)"/><ellipse cx="1450" cy="300" rx="140" ry="44.8" transform="rotate(160 1450 300)"/><ellipse cx="1450" cy="300" rx="140" ry="44.8" transform="rotate(170 1450 300)"/><ellipse cx="1700" cy="450" rx="120" ry="38.4" transform="rotate(0 1700 450)"/><ellipse cx="1700" cy="450" rx="120" ry="38.4" transform="rotate(10 1700 450)"/><ellipse cx="1700" cy="450" rx="120" ry="38.4" transform="rotate(20 1700 450)"/><ellipse cx="1700" cy="450" rx="120" ry="38.4" transform="rotate(30 1700 450)"/><ellipse cx="1700" cy="450" rx="120" ry="38.4" transform="rotate(40 1700 450)"/><ellipse cx="1700" cy="450" rx="120" ry="38.4" transform="rotate(50 1700 450)"/><ellipse cx="1700" cy="450" rx="120" ry="38.4" transform="rotate(60 1700 450)"/><ellipse cx="1700" cy="450" rx="120" ry="38.4" transform="rotate(70 1700 450)"/><ellipse cx="1700" cy="450" rx="120" ry="38.4" transform="rotate(80 1700 450)"/><ellipse cx="1700" cy="450" rx="120" ry="38.4" transform="rotate(90 1700 450)"/><ellipse cx="1700" cy="450" rx="120" ry="38.4" transform="rotate(100 1700 450)"/><ellipse cx="1700" cy="450" rx="120" ry="38.4" transform="rotate(110 1700 450)"/><ellipse cx="1700" cy="450" rx="120" ry="38.4" transform="rotate(120 1700 450)"/><ellipse cx="1700" cy="450" rx="120" ry="38.4" transform="rotate(130 1700 450)"/><ellipse cx="1700" cy="450" rx="120" ry="38.4" transform="rotate(140 1700 450)"/><ellipse cx="1700" cy="450" rx="120" ry="38.4" transform="rotate(150 1700 450)"/><ellipse cx="1700" cy="450" rx="120" ry="38.4" transform="rotate(160 1700 450)"/><ellipse cx="1700" cy="450" rx="120" ry="38.4" transform="rotate(170 1700 450)"/><ellipse cx="980" cy="560" rx="110" ry="35.2" transform="rotate(0 980 560)"/><ellipse cx="980" cy="560" rx="110" ry="35.2" transform="rotate(10 980 560)"/><ellipse cx="980" cy="560" rx="110" ry="35.2" transform="rotate(20 980 560)"/><ellipse cx="980" cy="560" rx="110" ry="35.2" transform="rotate(30 980 560)"/><ellipse cx="980" cy="560" rx="110" ry="35.2" transform="rotate(40 980 560)"/><ellipse cx="980" cy="560" rx="110" ry="35.2" transform="rotate(50 980 560)"/><ellipse cx="980" cy="560" rx="110" ry="35.2" transform="rotate(60 980 560)"/><ellipse cx="980" cy="560" rx="110" ry="35.2" transform="rotate(70 980 560)"/><ellipse cx="980" cy="560" rx="110" ry="35.2" transform="rotate(80 980 560)"/><ellipse cx="980" cy="560" rx="110" ry="35.2" transform="rotate(90 980 560)"/><ellipse cx="980" cy="560" rx="110" ry="35.2" transform="rotate(100 980 560)"/><ellipse cx="980" cy="560" rx="110" ry="35.2" transform="rotate(110 980 560)"/><ellipse cx="980" cy="560" rx="110" ry="35.2" transform="rotate(120 980 560)"/><ellipse cx="980" cy="560" rx="110" ry="35.2" transform="rotate(130 980 560)"/><ellipse cx="980" cy="560" rx="110" ry="35.2" transform="rotate(140 980 560)"/><ellipse cx="980" cy="560" rx="110" ry="35.2" transform="rotate(150 980 560)"/><ellipse cx="980" cy="560" rx="110" ry="35.2" transform="rotate(160 980 560)"/><ellipse cx="980" cy="560" rx="110" ry="35.2" transform="rotate(170 980 560)"/><ellipse cx="1300" cy="900" rx="140" ry="44.8" transform="rotate(0 1300 900)"/><ellipse cx="1300" cy="900" rx="140" ry="44.8" transform="rotate(10 1300 900)"/><ellipse cx="1300" cy="900" rx="140" ry="44.8" transform="rotate(20 1300 900)"/><ellipse cx="1300" cy="900" rx="140" ry="44.8" transform="rotate(30 1300 900)"/><ellipse cx="1300" cy="900" rx="140" ry="44.8" transform="rotate(40 1300 900)"/><ellipse cx="1300" cy="900" rx="140" ry="44.8" transform="rotate(50 1300 900)"/><ellipse cx="1300" cy="900" rx="140" ry="44.8" transform="rotate(60 1300 900)"/><ellipse cx="1300" cy="900" rx="140" ry="44.8" transform="rotate(70 1300 900)"/><ellipse cx="1300" cy="900" rx="140" ry="44.8" transform="rotate(80 1300 900)"/><ellipse cx="1300" cy="900" rx="140" ry="44.8" transform="rotate(90 1300 900)"/><ellipse cx="1300" cy="900" rx="140" ry="44.8" transform="rotate(100 1300 900)"/><ellipse cx="1300" cy="900" rx="140" ry="44.8" transform="rotate(110 1300 900)"/><ellipse cx="1300" cy="900" rx="140" ry="44.8" transform="rotate(120 1300 900)"/><ellipse cx="1300" cy="900" rx="140" ry="44.8" transform="rotate(130 1300 900)"/><ellipse cx="1300" cy="900" rx="140" ry="44.8" transform="rotate(140 1300 900)"/><ellipse cx="1300" cy="900" rx="140" ry="44.8" transform="rotate(150 1300 900)"/><ellipse cx="1300" cy="900" rx="140" ry="44.8" transform="rotate(160 1300 900)"/><ellipse cx="1300" cy="900" rx="140" ry="44.8" transform="rotate(170 1300 900)"/></g></svg>
<div class="a" style="left:725px;top:270px;width:211px;height:720px;background:#0A2850"></div>
<div class="a" style="left:936px;top:271px;width:5px;height:720px;background:#fff"></div>
<svg class="a" style="left:785px;top:315px" width="90" height="60" viewBox="785 315 90 60">
<circle cx="801.5" cy="330.5" r="6.6" fill="#fff"/><circle cx="855.7" cy="330.5" r="6.6" fill="#fff"/>
<path d="M827 330.5L801.8 362.6" stroke="#fff" stroke-width="13.4" stroke-linecap="round"/>
<path d="M842.5 346L828.6 362.6" stroke="#fff" stroke-width="13.4" stroke-linecap="round"/>
</svg>
<div class="t" style="left:723px;width:211px;text-align:center;top:382.3px;font-size:15px;font-weight:bold;color:#fff;letter-spacing:0">COMPANY LOGO</div>

<div class="t" style="left:980px;top:314.5px;font-size:72px;font-weight:bold;color:#1F1F1F;letter-spacing:-.85px">CERTIFICATE</div>
<div class="t" style="left:985px;top:397px;font-size:34.5px;font-weight:bold;color:#1F1F1F;letter-spacing:1.15px">OF COMPLETION</div>

<div class="t" style="left:984px;top:501.4px;font-size:22px;color:#2B2B2B;letter-spacing:.47px">We proudly present this certificate to</div>
<div class="t" style="left:984.5px;top:542.7px;font-size:56.5px;color:#142B7C;letter-spacing:.6px">[recipient.name]</div>
<div class="a" style="left:984px;top:607.5px;width:550px;height:1px;background:#E6E6E6"></div>
<div class="t" style="left:982.5px;top:633.9px;font-size:22px;color:#2B2B2B;letter-spacing:.22px">honouring completion of the course 'B2B Sales Manager'.</div>
<div class="t" style="left:982.5px;top:665.1px;font-size:22px;color:#2B2B2B;letter-spacing:.42px">For the ability to objectively assess the profitability of</div>
<div class="t" style="left:982.5px;top:696.4px;font-size:22px;color:#2B2B2B;letter-spacing:.45px">projects and present products.</div>

<div class="t" style="left:990px;top:831.4px;font-size:16.5px;font-weight:bold;color:#222">Joseph Mason</div>
<div class="t" style="left:989px;top:857.5px;font-size:15.6px;color:#333">MARKETING DIRECTOR</div>
<div class="t" style="left:989px;top:902.2px;font-size:16px;color:#333;letter-spacing:.73px">[certificate.issued_on]</div>
<div class="t" style="left:1342px;top:831px;font-size:16.5px;font-weight:bold;color:#222">Samson Chase</div>
<div class="t" style="left:1342px;top:860.6px;font-size:16px;color:#333;letter-spacing:.15px">HEAD OF CONSULTING COMPANY</div>
<div class="t" style="left:1342px;top:902.3px;font-size:16px;color:#333;letter-spacing:.87px">[certificate.uuid]</div>


<!-- signatures -->
<svg class="a" style="left:0;top:0" width="1920" height="966" viewBox="0 0 1920 966" fill="none" stroke="#262626" stroke-linecap="round" stroke-linejoin="round">
<circle cx="1028.6" cy="798.4" r="1.3" fill="#262626" stroke="none"/><path d="M1028.8 798.6C1031 795 1027 793.6 1022 794.3C1012 796 996 803 993 809C991 814 1000 814.7 1010 814.3C1060 812.5 1110 809.5 1161 811.4" stroke-width="1.6"/>
<path d="M1062 786.8C1057 793 1050 800 1045.7 804.4M1050.5 791.8L1058.5 792.4" stroke-width="1.7"/>
<path d="M1045.7 804.4C1048 801.5 1050.5 799.2 1053.5 799.3C1056.5 799.5 1056 803 1053.5 803.2C1051.5 803.3 1052.5 800.5 1056 800.6C1059 800.8 1059.5 803.5 1061 803C1063 801.5 1064.5 799.3 1066.5 799.5C1068.5 799.8 1068.5 803 1070.5 802.8C1072.5 802.5 1074 799.5 1076.5 799.6C1079 799.8 1079 803.2 1081.5 802.8C1084 802.4 1085.5 800 1088 800.2C1091 800.4 1092 802.5 1095 802C1098 801.5 1100 799.5 1103 799.6C1106 799.8 1108 800.5 1111 799C1113.5 797.8 1116 797.2 1116.3 797.3L1110.2 806.3C1115 804 1125 801 1139 799.2C1148 798.2 1153 799.5 1156.5 801.5" stroke-width="1.5"/>
<path d="M1342.3 796.2C1360 795.5 1380 793 1400.6 792.4C1395 791.8 1385 791.5 1375 790.5C1370 789.8 1366 790.5 1365.6 790.9" stroke-width="1.6"/>
<path d="M1387.5 784.5L1370.7 806.4" stroke-width="1.7"/>
<path d="M1362.7 798.3C1368 799 1373 799.5 1376 801C1379 803 1381.5 803.5 1383 801.5C1385 799 1386.5 799.5 1388 801.5C1390 803.5 1392.5 803 1394 801C1396 798.5 1398.5 798.5 1400.5 801C1402.5 803 1405 802.5 1407 800C1409 798 1411.5 798 1413 800C1415 802 1417 801.5 1419 800C1422 798.5 1427 798.5 1428.4 799.5C1431 801 1432 804 1431.5 806C1429 812 1425 818 1421.8 822.8" stroke-width="1.6"/>
<path d="M1367 813.3C1400 810 1430 806.5 1466.3 804.2" stroke-width="1.7"/>
</svg>

<!-- medal -->
<svg class="a" style="left:1530px;top:310px" width="145" height="200" viewBox="1530 310 145 200">
<defs><radialGradient id="gold" cx=".58" cy=".55" r=".6"><stop offset="0" stop-color="#FAE29A"/><stop offset=".55" stop-color="#EFCB69"/><stop offset="1" stop-color="#E0B24C"/></radialGradient></defs>
<path d="M1563 433L1594 445L1569 502L1559.5 480.5L1538 487.6Z" fill="#0C2A55"/>
<path d="M1643 432.4L1610.7 444.8L1635.7 502L1645 480.5L1666.7 488.8Z" fill="#0C2A55"/>
<circle cx="1603" cy="378.7" r="63.5" fill="#fff"/>
<circle cx="1603" cy="378.7" r="61.5" fill="url(#gold)"/>
<circle cx="1603" cy="378.7" r="55" fill="none" stroke="#7A5E2A" stroke-width="1.8" stroke-dasharray="0.1 5.3" stroke-linecap="round" opacity=".85"/>
<path d="M1588 335.5l1.3 3.2 3.4.2-2.6 2.2.8 3.3-2.9-1.8-2.9 1.8.8-3.3-2.6-2.2 3.4-.2z" fill="#0C2A55"/>
<path d="M1602.4 333l1.5 3.6 3.9.3-3 2.5.9 3.8-3.3-2-3.3 2 .9-3.8-3-2.5 3.9-.3z" fill="#0C2A55"/>
<path d="M1616.7 335.5l1.3 3.2 3.4.2-2.6 2.2.8 3.3-2.9-1.8-2.9 1.8.8-3.3-2.6-2.2 3.4-.2z" fill="#0C2A55"/>
<text x="1602" y="383" text-anchor="middle" font-family="Liberation Sans" font-weight="bold" font-size="26" fill="#0C2A55" letter-spacing=".8">2024</text>
<text x="1602" y="405.5" text-anchor="middle" font-family="Liberation Sans" font-size="11.8" fill="#403A2E" stroke="#403A2E" stroke-width=".35">AWARDED</text>
</svg>

</body></html>
